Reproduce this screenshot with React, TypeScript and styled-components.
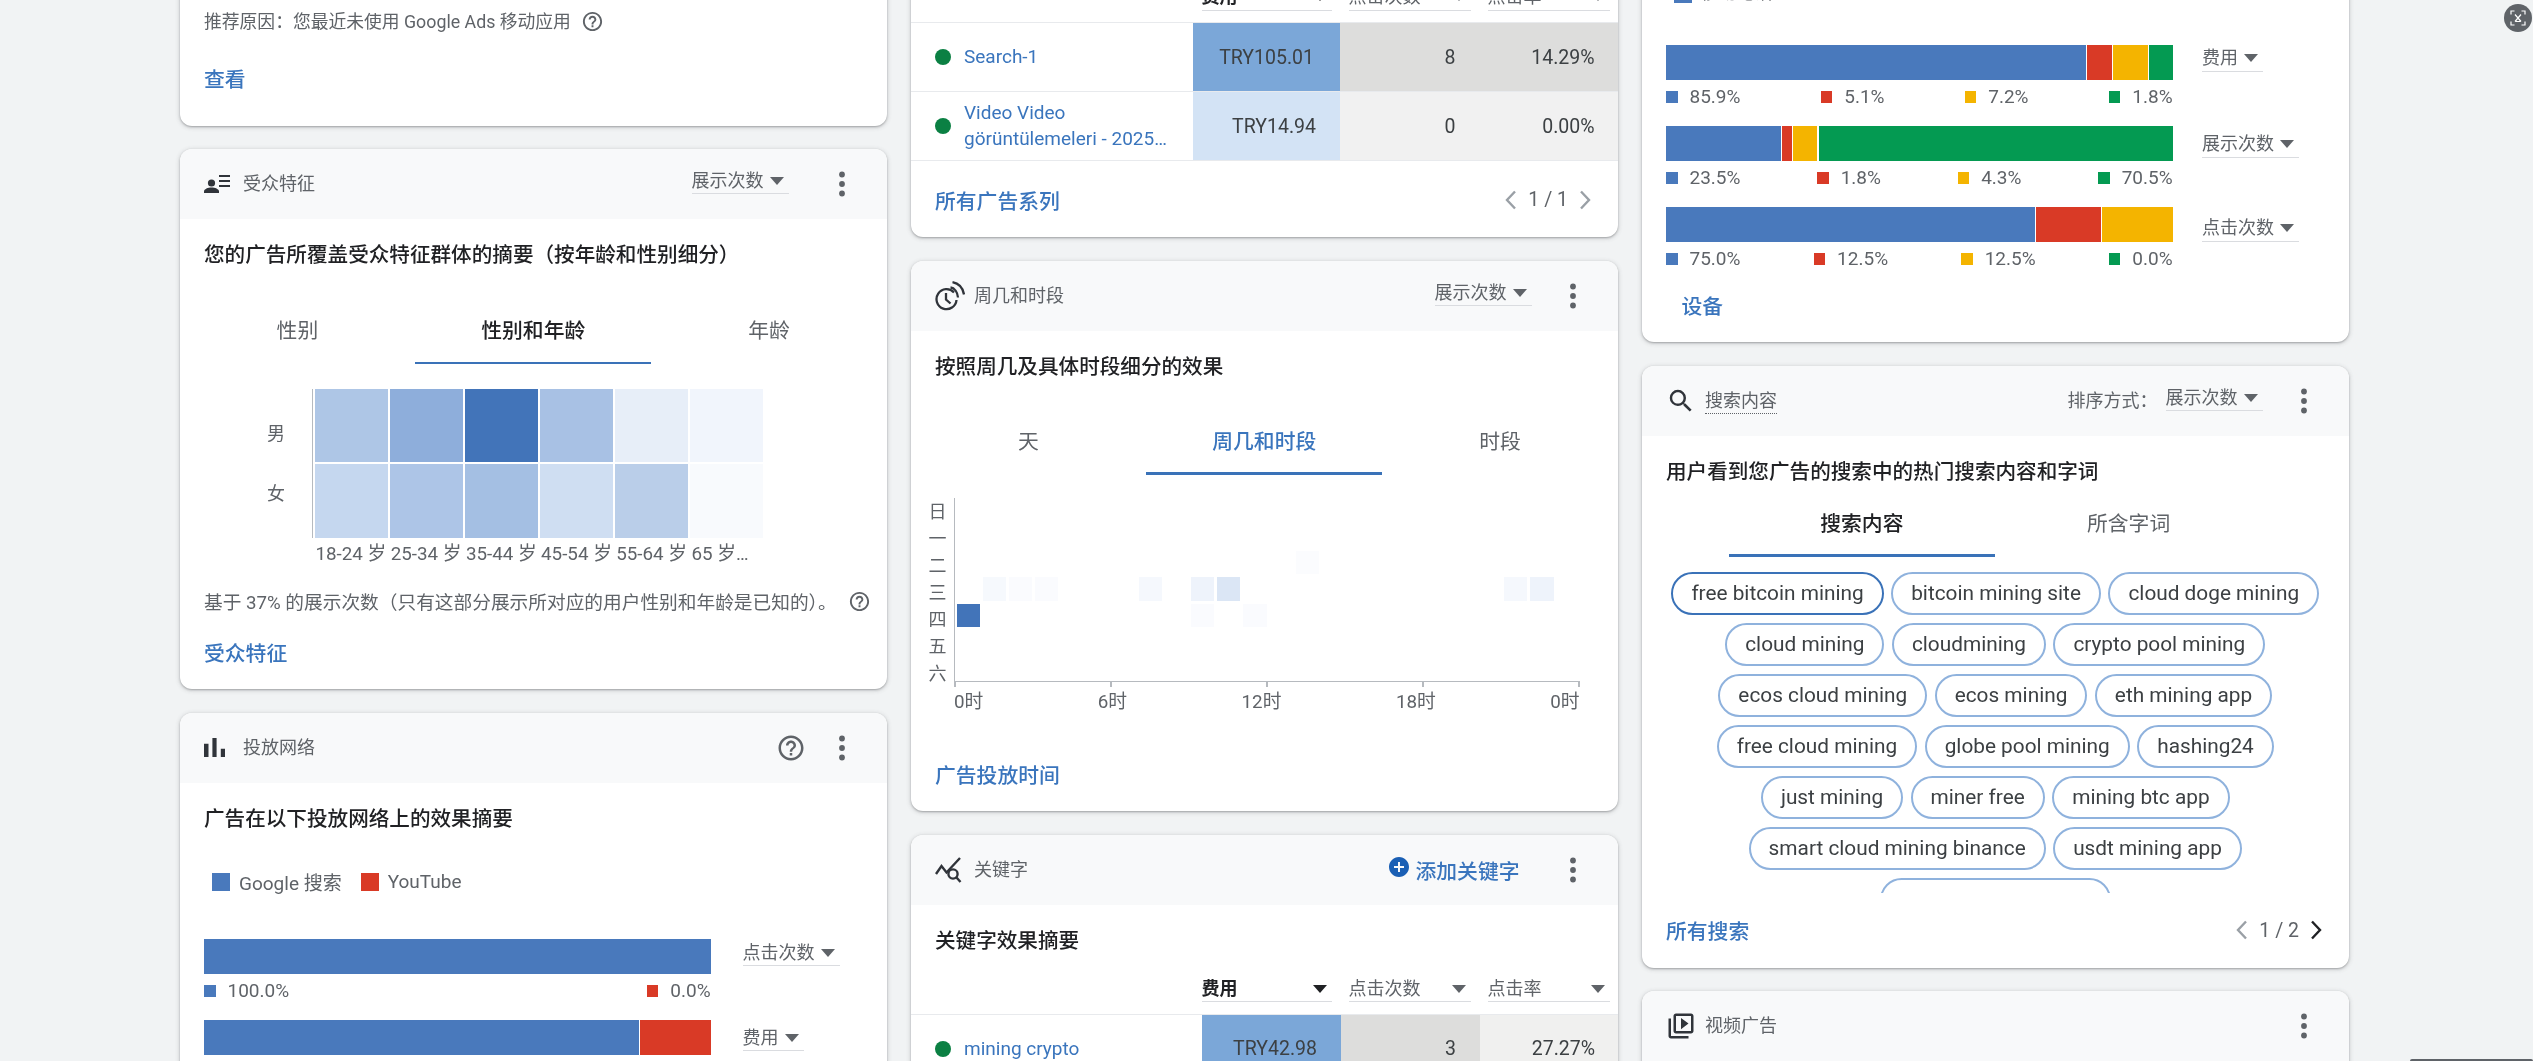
import React from 'react';
import styled, { createGlobalStyle } from 'styled-components';
import { MdAddCircle, MdHelpOutline, MdOutlineVideoLibrary, MdSearch } from 'react-icons/md';

const GlobalStyle = createGlobalStyle`
  html, body {
    margin: 0;
    padding: 0;
    background: #fff;
    overflow: hidden;
  }
  body {
    font-family: Roboto, "Noto Sans CJK SC", sans-serif;
    color: #3c4043;
  }
  * {
    box-sizing: border-box;
  }
`;

const Page = styled.div`
  position: relative;
  width: 2533px;
  height: 1061px;
  overflow: hidden;
  background: #f1f3f4;
  filter: blur(0.55px);
`;

const Columns = styled.div`
  display: grid;
  grid-template-columns: repeat(3, 707.5px);
  column-gap: 23.5px;
  padding-left: 179.5px;
`;

const Column = styled.div<{ $top: number }>`
  display: flex;
  flex-direction: column;
  gap: 23.5px;
  margin-top: ${p => p.$top}px;
`;

const Card = styled.section`
  background: #fff;
  border-radius: 12px;
  overflow: hidden;
  box-shadow: 0 1px 2px rgba(60, 64, 67, 0.35), 0 1px 4px 1px rgba(60, 64, 67, 0.16);
`;

const CardHeader = styled.header`
  display: flex;
  align-items: center;
  height: 70px;
  padding: 0 37.5px 0 24.5px;
  background: #f8f9fa;
`;

const IconSlot = styled.div`
  flex: none;
  display: flex;
  align-items: center;
  width: 39px;
  color: #30343a;
`;

const HeaderTitle = styled.div`
  flex: 1;
  font-size: 18px;
  line-height: 24px;
  color: #5f6368;
`;

const DottedTitle = styled.span`
  border-bottom: 1.5px dotted #5f6368;
  padding-bottom: 2px;
`;

const SortLabel = styled.span`
  font-size: 18px;
  line-height: 24px;
  color: #5f6368;
  margin-right: 8px;
`;

const Arrow = styled.span<{ $dark?: boolean }>`
  flex: none;
  width: 0;
  height: 0;
  border-left: 7px solid transparent;
  border-right: 7px solid transparent;
  border-top: 8px solid ${p => (p.$dark ? '#202124' : '#5f6368')};
`;

const SelectBox = styled.div<{ $bold?: boolean }>`
  display: flex;
  align-items: center;
  justify-content: space-between;
  gap: 6px;
  height: 25.5px;
  padding-right: 5px;
  border-bottom: 1.5px solid #dadce0;
  font-size: 18px;
  line-height: 24px;
  font-weight: ${p => (p.$bold ? 700 : 400)};
  color: ${p => (p.$bold ? '#202124' : '#5f6368')};
`;

const HeaderSelect = styled(SelectBox)<{ $right: number }>`
  margin: 0 ${p => p.$right}px 5px 0;
`;

const BarSelect = styled(SelectBox)<{ $nudge: number }>`
  justify-self: start;
  margin-top: ${p => p.$nudge}px;
`;

const Dots = styled.svg`
  flex: none;
  width: 16px;
  height: 32px;
  fill: #5f6368;
`;

const HelpButton = styled.div<{ $size: number; $right?: number }>`
  flex: none;
  display: flex;
  color: #5f6368;
  margin-right: ${p => p.$right ?? 0}px;
  font-size: ${p => p.$size}px;
`;

const AddAction = styled.div`
  display: flex;
  align-items: center;
  gap: 5px;
  margin-right: 45px;
  font-size: 20.8px;
  font-weight: 500;
  color: #3a75bd;
  svg {
    color: #1a5fb4;
    margin-top: -6px;
  }
`;

const SummaryTitle = styled.h3`
  margin: 22px 24.5px 0;
  font-size: 20.6px;
  line-height: 28px;
  font-weight: 500;
  color: #202124;
`;

const ReasonRow = styled.div`
  display: flex;
  align-items: center;
  gap: 10px;
  padding: 30px 24.5px 0;
  font-size: 17.8px;
  line-height: 24px;
  color: #5f6368;
`;

const CardFooter = styled.footer<{ $top?: number; $bottom?: number }>`
  display: flex;
  align-items: center;
  justify-content: space-between;
  height: 72px;
  margin: ${p => p.$top ?? 0}px 0 ${p => p.$bottom ?? 0}px;
  padding: 0 26px 3px 24.5px;
`;

const FooterLink = styled.a<{ $indent?: number }>`
  margin-left: ${p => p.$indent ?? 0}px;
  font-size: 20.8px;
  font-weight: 500;
  color: #3a75bd;
`;

const Pager = styled.div`
  display: flex;
  align-items: center;
  gap: 11px;
  font-size: 19.5px;
  color: #5f6368;
`;

const PagerChevron = styled.svg<{ $active?: boolean }>`
  width: 13px;
  height: 22px;
  fill: none;
  stroke: ${p => (p.$active ? '#202124' : '#9aa0a6')};
  stroke-width: 2.4;
`;

const Tabs = styled.div<{ $top: number; $inset?: number }>`
  display: flex;
  margin: ${p => p.$top}px ${p => p.$inset ?? 0}px 0;
`;

const Tab = styled.div<{ $active?: boolean; $blue?: boolean }>`
  position: relative;
  flex: 1;
  display: flex;
  align-items: center;
  justify-content: center;
  height: 66px;
  padding-bottom: 6px;
  font-size: 20.8px;
  font-weight: ${p => (p.$active ? 500 : 400)};
  color: ${p => (p.$active ? (p.$blue ? '#3a75bd' : '#202124') : '#5f6368')};
  &::after {
    content: '';
    position: absolute;
    left: 0;
    right: 0;
    bottom: 1px;
    height: 2.5px;
    background: ${p => (p.$active ? '#3a72b8' : 'transparent')};
  }
`;

const HeatArea = styled.div`
  display: grid;
  grid-template-columns: 132.5px 1fr;
  margin-top: 24px;
`;

const HeatLabels = styled.div`
  display: flex;
  flex-direction: column;
  justify-content: center;
  align-items: flex-end;
  gap: 36px;
  padding: 0 27px 0 0;
  font-size: 18px;
  line-height: 24px;
  color: #5f6368;
`;

const HeatPlot = styled.div`
  display: grid;
  grid-template-columns: repeat(6, 73px);
  grid-template-rows: 73px 74px;
  gap: 2.2px;
  width: 454px;
  padding-left: 1.5px;
  border-left: 1.5px solid #b6babf;
`;

const HeatCell = styled.div<{ $color: string }>`
  background: ${p => p.$color};
`;

const AgeLabels = styled.div`
  display: grid;
  grid-template-columns: repeat(6, 75.2px);
  margin: 4px 0 0 136px;
  font-size: 18.8px;
  line-height: 24px;
  color: #5f6368;
  white-space: nowrap;
`;

const NoteRow = styled.div`
  display: flex;
  justify-content: space-between;
  margin: 24px 16px 0 24.5px;
  font-size: 18.7px;
  line-height: 26px;
  color: #5f6368;
`;

const WeekArea = styled.div`
  display: grid;
  grid-template-columns: 18px 625.6px;
  column-gap: 7.5px;
  margin: 22.5px 0 0 18px;
`;

const DayLabels = styled.div`
  grid-row: 1 / span 3;
  display: flex;
  flex-direction: column;
  justify-content: space-between;
  height: 186px;
  margin-top: 2px;
  font-size: 18px;
  line-height: 24px;
  color: #5f6368;
`;

const WeekPlot = styled.div`
  display: grid;
  grid-template-columns: repeat(24, 1fr);
  grid-template-rows: repeat(7, 1fr);
  column-gap: 3px;
  row-gap: 3.4px;
  height: 184px;
  padding: 0 0 1px 1.5px;
  border-left: 1.5px solid #b6babf;
  border-bottom: 1.5px solid #b6babf;
`;

const WeekTicks = styled.div`
  display: flex;
  justify-content: space-between;
  grid-column: 2;
  height: 4.5px;
`;

const WeekTick = styled.span`
  width: 1.5px;
  background: #b6babf;
`;

const HourLabels = styled.div`
  display: flex;
  justify-content: space-between;
  grid-column: 2;
  margin-top: 3.5px;
  font-size: 18.8px;
  line-height: 24px;
  color: #5f6368;
`;

const TableHead = styled.div<{ $top?: number }>`
  display: grid;
  grid-template-columns: 291px 139px 139px 139px;
  height: 50px;
  margin-top: ${p => p.$top ?? 0}px;
  padding-top: 12px;
  border-bottom: 1.5px solid #e8eaed;
`;

const HeadCell = styled.div<{ $first?: boolean }>`
  padding: 0 9px 0 ${p => (p.$first ? 0 : 8)}px;
`;

const TableRow = styled.div<{ $wideCost?: boolean }>`
  display: grid;
  grid-template-columns: ${p => (p.$wideCost ? '282px 147.5px 139px 139px' : '291px 139px 139px 139px')};
  height: 69px;
  border-bottom: 1.5px solid #e8eaed;
`;

const NameCell = styled.div`
  display: flex;
  align-items: center;
  gap: 13px;
  padding: 0 23.5px 0 24.5px;
`;

const StatusDot = styled.span`
  flex: none;
  width: 16px;
  height: 16px;
  border-radius: 50%;
  background: #0b8043;
`;

const NameText = styled.span`
  display: -webkit-box;
  -webkit-box-orient: vertical;
  -webkit-line-clamp: 2;
  overflow: hidden;
  font-size: 19px;
  line-height: 26px;
  color: #3a75bd;
`;

const ValueCell = styled.div<{ $bg: string; $pad?: number }>`
  display: flex;
  align-items: center;
  justify-content: flex-end;
  padding-right: ${p => p.$pad ?? 23.5}px;
  background: ${p => p.$bg};
  font-size: 19.5px;
  color: #3c4043;
`;

const LegendRow = styled.div`
  display: flex;
  align-items: center;
  gap: 19px;
  height: 28px;
  margin: 35px 0 0 32.5px;
  font-size: 19px;
  color: #5f6368;
`;

const TopLegend = styled.div`
  display: flex;
  align-items: center;
  height: 48px;
  padding-left: 32px;
  font-size: 18px;
  color: #5f6368;
`;

const LegendItem = styled.div`
  display: flex;
  align-items: center;
  gap: 9px;
`;

const LegendCaption = styled.span`
  margin-bottom: 6px;
`;

const LegendSwatch = styled.span<{ $color: string }>`
  flex: none;
  width: 18px;
  height: 18px;
  background: ${p => p.$color};
`;

const BarList = styled.div<{ $top: number }>`
  display: flex;
  flex-direction: column;
  gap: 17px;
  margin: ${p => p.$top}px 0 0 24.5px;
`;

const BarRow = styled.div<{ $gap: number }>`
  display: grid;
  grid-template-columns: 506.6px auto;
  column-gap: ${p => p.$gap}px;
  justify-content: start;
`;

const Bar = styled.div`
  display: flex;
  gap: 1.2px;
  height: 35px;
`;

const BarSegment = styled.div<{ $color: string; $grow: number }>`
  flex: ${p => p.$grow} 0 0;
  background: ${p => p.$color};
`;

const BarValues = styled.div`
  display: flex;
  justify-content: space-between;
  grid-column: 1;
  height: 24px;
  margin-top: 5px;
  font-size: 19px;
  line-height: 24px;
  color: #5f6368;
`;

const BarValue = styled.div`
  display: flex;
  align-items: center;
  gap: 12px;
`;

const ValueSwatch = styled.span<{ $color: string }>`
  flex: none;
  width: 11.5px;
  height: 12px;
  background: ${p => p.$color};
`;

const ChipCloud = styled.div`
  display: flex;
  flex-wrap: wrap;
  justify-content: center;
  align-content: flex-start;
  gap: 7.5px;
  height: 321.4px;
  margin: 14px 24px 0;
  overflow: hidden;
`;

const Chip = styled.div<{ $active?: boolean; $width?: number }>`
  display: flex;
  align-items: center;
  height: 43.5px;
  min-width: ${p => p.$width ?? 0}px;
  padding: 0 18px;
  border: 2px solid ${p => (p.$active ? '#3a72b8' : '#8fb2dd')};
  border-radius: 22px;
  font-size: 20.8px;
  color: #3c4043;
  white-space: nowrap;
`;

const VideoSpacer = styled.div`
  height: 60px;
`;

const CaptureButton = styled.div`
  position: absolute;
  top: 4px;
  left: 2504px;
  display: flex;
  align-items: center;
  justify-content: center;
  width: 28px;
  height: 28px;
  border-radius: 50%;
  background: #5f6368;
`;

const BottomBar = styled.div`
  position: absolute;
  left: 2410px;
  right: 0;
  bottom: 0;
  height: 2.5px;
  border-radius: 2px 2px 0 0;
  background: #5f6368;
`;

const BLUE = '#4979bc';
const RED = '#d93a26';
const YELLOW = '#f4b400';
const GREEN = '#049a52';

// full-width punctuation kept as escapes so an editor can't turn it into ASCII
const REASON_TEXT = '推荐原因\uFF1A您最近未使用 Google Ads 移动应用';
const AUDIENCE_SUMMARY = '您的广告所覆盖受众特征群体的摘要\uFF08按年龄和性别细分\uFF09';
const AUDIENCE_NOTE = '基于 37% 的展示次数\uFF08只有这部分展示所对应的用户性别和年龄是已知的\uFF09。';
const SORT_LABEL = '排序方式\uFF1A';

type BarData = {
  metric: string;
  nudge: number;
  segments: { color: string; width: number }[];
  values: { color: string; label: string }[];
};

const NETWORK_BARS: BarData[] = [
  {
    metric: '点击次数',
    nudge: 2,
    segments: [{ color: BLUE, width: 100 }],
    values: [
      { color: BLUE, label: '100.0%' },
      { color: RED, label: '0.0%' },
    ],
  },
  {
    metric: '费用',
    nudge: 6,
    segments: [
      { color: BLUE, width: 897 },
      { color: RED, width: 146 },
    ],
    values: [
      { color: BLUE, label: '86.0%' },
      { color: RED, label: '14.0%' },
    ],
  },
];

const DEVICE_BARS: BarData[] = [
  {
    metric: '费用',
    nudge: 1,
    segments: [
      { color: BLUE, width: 866 },
      { color: RED, width: 50 },
      { color: YELLOW, width: 72 },
      { color: GREEN, width: 49 },
    ],
    values: [
      { color: BLUE, label: '85.9%' },
      { color: RED, label: '5.1%' },
      { color: YELLOW, label: '7.2%' },
      { color: GREEN, label: '1.8%' },
    ],
  },
  {
    metric: '展示次数',
    nudge: 6,
    segments: [
      { color: BLUE, width: 237 },
      { color: RED, width: 20 },
      { color: YELLOW, width: 50 },
      { color: GREEN, width: 729 },
    ],
    values: [
      { color: BLUE, label: '23.5%' },
      { color: RED, label: '1.8%' },
      { color: YELLOW, label: '4.3%' },
      { color: GREEN, label: '70.5%' },
    ],
  },
  {
    metric: '点击次数',
    nudge: 9,
    segments: [
      { color: BLUE, width: 761 },
      { color: RED, width: 135 },
      { color: YELLOW, width: 145 },
    ],
    values: [
      { color: BLUE, label: '75.0%' },
      { color: RED, label: '12.5%' },
      { color: YELLOW, label: '12.5%' },
      { color: GREEN, label: '0.0%' },
    ],
  },
];

const HEAT_COLORS = [
  '#aec6e6', '#8eaedb', '#4274b9', '#a8c1e4', '#e7eef8', '#f1f5fc',
  '#c5d7ef', '#adc5e7', '#a4bfe3', '#cfdef2', '#bacee9', '#f8fafd',
];

const AGE_LABELS = ['18-24 岁', '25-34 岁', '35-44 岁', '45-54 岁', '55-64 岁', '65 岁…'];
const DAY_LABELS = ['日', '一', '二', '三', '四', '五', '六'];
const HOUR_LABELS = ['0时', '6时', '12时', '18时', '0时'];

// day index, hour index -> colour
const WEEK_CELLS: Record<string, string> = {
  '2-13': '#fbfcfe',
  '3-1': '#f6f9fd',
  '3-2': '#fafbfe',
  '3-3': '#fafbfe',
  '3-7': '#f5f8fd',
  '3-9': '#eef3fb',
  '3-10': '#dbe6f5',
  '3-21': '#f5f8fd',
  '3-22': '#eef3fb',
  '4-0': '#4274b9',
  '4-9': '#fafbfe',
  '4-11': '#fafbfe',
};

const CHIPS = [
  'free bitcoin mining', 'bitcoin mining site', 'cloud doge mining',
  'cloud mining', 'cloudmining', 'crypto pool mining',
  'ecos cloud mining', 'ecos mining', 'eth mining app',
  'free cloud mining', 'globe pool mining', 'hashing24',
  'just mining', 'miner free', 'mining btc app',
  'smart cloud mining binance', 'usdt mining app',
];

const MoreDots = () => (
  <Dots viewBox="0 0 16 32">
    <circle cx="8" cy="6.5" r="2.9" />
    <circle cx="8" cy="16" r="2.9" />
    <circle cx="8" cy="25.5" r="2.9" />
  </Dots>
);

const AudienceIcon = () => (
  <svg width="26" height="18" viewBox="0 0 26 18" fill="currentColor">
    <circle cx="7.5" cy="8" r="3.6" />
    <path d="M0 18v-1.5c0-2.5 4-4 7.5-4s7.5 1.5 7.5 4V18z" />
    <path d="M15 0h11v2H15zM15 5h11v2H15zM15 10h11v2H15z" />
  </svg>
);

const NetworkIcon = () => (
  <svg width="21" height="19" viewBox="5 5 14 14" preserveAspectRatio="none" fill="currentColor">
    <path d="M5 9.2h3V19H5zM10.6 5h2.8v14h-2.8zM16.2 13H19v6h-2.8z" />
  </svg>
);

const ClockIcon = () => (
  <svg width="30" height="30" viewBox="0 0 30 30" fill="none" stroke="currentColor" strokeWidth="2.3">
    <path d="M19 11.5A10 10 0 1 0 21.5 19" />
    <path d="M11 12v6.5l4.5 4" />
    <path d="M15.5 6.5C19.5 7 22.5 11 23 16.5" />
    <path d="M17.5 1.2C24 2.5 28 7.5 29 13.5" />
  </svg>
);

const KeywordIcon = () => (
  <svg width="27" height="26" viewBox="0 0 27 26" fill="none" stroke="currentColor" strokeWidth="2.4">
    <path d="M1 17l5.5-8 5 6.5L25 1" />
    <circle cx="18" cy="17" r="4.6" fill="#f8f9fa" />
    <path d="M21.5 20.5l4 4.5" />
  </svg>
);

const ChevronLeft = ({ active }: { active?: boolean }) => (
  <PagerChevron $active={active} viewBox="0 0 13 22">
    <path d="M11 2.5L3 11l8 8.5" />
  </PagerChevron>
);

const ChevronRight = ({ active }: { active?: boolean }) => (
  <PagerChevron $active={active} viewBox="0 0 13 22">
    <path d="M2 2.5L10 11l-8 8.5" />
  </PagerChevron>
);

const Bars = ({ data, top, selectGap }: { data: BarData[]; top: number; selectGap: number }) => (
  <BarList $top={top}>
    {data.map(bar => (
      <BarRow key={bar.metric} $gap={selectGap}>
        <Bar>
          {bar.segments.map(segment => (
            <BarSegment key={segment.color} $color={segment.color} $grow={segment.width} />
          ))}
        </Bar>
        <BarSelect $nudge={bar.nudge}>
          {bar.metric}
          <Arrow />
        </BarSelect>
        <BarValues>
          {bar.values.map(value => (
            <BarValue key={value.color}>
              <ValueSwatch $color={value.color} />
              {value.label}
            </BarValue>
          ))}
        </BarValues>
      </BarRow>
    ))}
  </BarList>
);

const Head = ({ top }: { top?: number }) => (
  <TableHead $top={top}>
    <div />
    <HeadCell $first>
      <SelectBox $bold>
        费用
        <Arrow $dark />
      </SelectBox>
    </HeadCell>
    <HeadCell>
      <SelectBox>
        点击次数
        <Arrow />
      </SelectBox>
    </HeadCell>
    <HeadCell>
      <SelectBox>
        点击率
        <Arrow />
      </SelectBox>
    </HeadCell>
  </TableHead>
);

export default function App() {
  return (
    <Page>
      <GlobalStyle />
      <Columns>
        <Column $top={-20.5}>
          <Card>
            <ReasonRow>
              {REASON_TEXT}
              <HelpButton $size={23}>
                <MdHelpOutline />
              </HelpButton>
            </ReasonRow>
            <CardFooter $top={10} $bottom={10}>
              <FooterLink>查看</FooterLink>
            </CardFooter>
          </Card>

          <Card>
            <CardHeader>
              <IconSlot>
                <AudienceIcon />
              </IconSlot>
              <HeaderTitle>受众特征</HeaderTitle>
              <HeaderSelect $right={45}>
                展示次数
                <Arrow />
              </HeaderSelect>
              <MoreDots />
            </CardHeader>
            <SummaryTitle>{AUDIENCE_SUMMARY}</SummaryTitle>
            <Tabs $top={30}>
              <Tab>性别</Tab>
              <Tab $active>性别和年龄</Tab>
              <Tab>年龄</Tab>
            </Tabs>
            <HeatArea>
              <HeatLabels>
                <span>男</span>
                <span>女</span>
              </HeatLabels>
              <HeatPlot>
                {HEAT_COLORS.map((color, i) => (
                  <HeatCell key={i} $color={color} />
                ))}
              </HeatPlot>
            </HeatArea>
            <AgeLabels>
              {AGE_LABELS.map(label => (
                <span key={label}>{label}</span>
              ))}
            </AgeLabels>
            <NoteRow>
              {AUDIENCE_NOTE}
              <HelpButton $size={23}>
                <MdHelpOutline />
              </HelpButton>
            </NoteRow>
            <CardFooter $top={1}>
              <FooterLink>受众特征</FooterLink>
            </CardFooter>
          </Card>

          <Card>
            <CardHeader>
              <IconSlot>
                <NetworkIcon />
              </IconSlot>
              <HeaderTitle>投放网络</HeaderTitle>
              <HelpButton $size={30} $right={28}>
                <MdHelpOutline />
              </HelpButton>
              <MoreDots />
            </CardHeader>
            <SummaryTitle>广告在以下投放网络上的效果摘要</SummaryTitle>
            <LegendRow>
              <LegendItem>
                <LegendSwatch $color={BLUE} />
                Google 搜索
              </LegendItem>
              <LegendItem>
                <LegendSwatch $color={RED} />
                YouTube
              </LegendItem>
            </LegendRow>
            <Bars data={NETWORK_BARS} top={43} selectGap={32} />
          </Card>
        </Column>

        <Column $top={-27}>
          <Card>
            <Head />
            <TableRow $wideCost>
              <NameCell>
                <StatusDot />
                <NameText>Search-1</NameText>
              </NameCell>
              <ValueCell $bg="#7ba7d8" $pad={26}>TRY105.01</ValueCell>
              <ValueCell $bg="#dddddc">8</ValueCell>
              <ValueCell $bg="#dddddc">14.29%</ValueCell>
            </TableRow>
            <TableRow $wideCost>
              <NameCell>
                <StatusDot />
                <NameText>Video Video görüntülemeleri - 2025-03-17</NameText>
              </NameCell>
              <ValueCell $bg="#d3e3f5" $pad={24}>TRY14.94</ValueCell>
              <ValueCell $bg="#f1f1f1">0</ValueCell>
              <ValueCell $bg="#f1f1f1">0.00%</ValueCell>
            </TableRow>
            <CardFooter $top={4}>
              <FooterLink>所有广告系列</FooterLink>
              <Pager>
                <ChevronLeft />
                1 / 1
                <ChevronRight />
              </Pager>
            </CardFooter>
          </Card>

          <Card>
            <CardHeader>
              <IconSlot>
                <ClockIcon />
              </IconSlot>
              <HeaderTitle>周几和时段</HeaderTitle>
              <HeaderSelect $right={33}>
                展示次数
                <Arrow />
              </HeaderSelect>
              <MoreDots />
            </CardHeader>
            <SummaryTitle>按照周几及具体时段细分的效果</SummaryTitle>
            <Tabs $top={29}>
              <Tab>天</Tab>
              <Tab $active $blue>周几和时段</Tab>
              <Tab>时段</Tab>
            </Tabs>
            <WeekArea>
              <DayLabels>
                {DAY_LABELS.map(day => (
                  <span key={day}>{day}</span>
                ))}
              </DayLabels>
              <WeekPlot>
                {DAY_LABELS.flatMap((_, day) =>
                  Array.from({ length: 24 }, (_, hour) => (
                    <HeatCell key={`${day}-${hour}`} $color={WEEK_CELLS[`${day}-${hour}`] ?? 'transparent'} />
                  )),
                )}
              </WeekPlot>
              <WeekTicks>
                {HOUR_LABELS.map((_, i) => (
                  <WeekTick key={i} />
                ))}
              </WeekTicks>
              <HourLabels>
                {HOUR_LABELS.map((label, i) => (
                  <span key={i}>{label}</span>
                ))}
              </HourLabels>
            </WeekArea>
            <CardFooter $top={25}>
              <FooterLink>广告投放时间</FooterLink>
            </CardFooter>
          </Card>

          <Card>
            <CardHeader>
              <IconSlot>
                <KeywordIcon />
              </IconSlot>
              <HeaderTitle>关键字</HeaderTitle>
              <AddAction>
                <MdAddCircle size={24} />
                添加关键字
              </AddAction>
              <MoreDots />
            </CardHeader>
            <SummaryTitle>关键字效果摘要</SummaryTitle>
            <Head top={10} />
            <TableRow>
              <NameCell>
                <StatusDot />
                <NameText>mining crypto</NameText>
              </NameCell>
              <ValueCell $bg="#7ba7d8">TRY42.98</ValueCell>
              <ValueCell $bg="#dddddc">3</ValueCell>
              <ValueCell $bg="#f0f0ef">27.27%</ValueCell>
            </TableRow>
          </Card>
        </Column>

        <Column $top={-30}>
          <Card>
            <TopLegend>
              <LegendItem>
                <LegendSwatch $color={BLUE} />
                <LegendCaption>移动电话</LegendCaption>
              </LegendItem>
            </TopLegend>
            <Bars data={DEVICE_BARS} top={27} selectGap={29.5} />
            <CardFooter $top={-1}>
              <FooterLink $indent={15.5}>设备</FooterLink>
            </CardFooter>
          </Card>

          <Card>
            <CardHeader>
              <IconSlot>
                <MdSearch size={30} />
              </IconSlot>
              <HeaderTitle>
                <DottedTitle>搜索内容</DottedTitle>
              </HeaderTitle>
              <SortLabel>{SORT_LABEL}</SortLabel>
              <HeaderSelect $right={33}>
                展示次数
                <Arrow />
              </HeaderSelect>
              <MoreDots />
            </CardHeader>
            <SummaryTitle>用户看到您广告的搜索中的热门搜索内容和字词</SummaryTitle>
            <Tabs $top={6} $inset={87}>
              <Tab $active>搜索内容</Tab>
              <Tab>所含字词</Tab>
            </Tabs>
            <ChipCloud>
              {CHIPS.map((chip, i) => (
                <Chip key={chip} $active={i === 0}>{chip}</Chip>
              ))}
              <Chip $width={231} />
            </ChipCloud>
            <CardFooter $top={3}>
              <FooterLink>所有搜索</FooterLink>
              <Pager>
                <ChevronLeft />
                1 / 2
                <ChevronRight active />
              </Pager>
            </CardFooter>
          </Card>

          <Card>
            <CardHeader>
              <IconSlot>
                <MdOutlineVideoLibrary size={30} />
              </IconSlot>
              <HeaderTitle>视频广告</HeaderTitle>
              <MoreDots />
            </CardHeader>
            <VideoSpacer />
          </Card>
        </Column>
      </Columns>

      <CaptureButton>
        <svg width="16" height="16" viewBox="0 0 16 16" fill="none" stroke="#fff" strokeWidth="1.2">
          <path d="M1 4.5V1h3.5M11.5 1H15v3.5M15 11.5V15h-3.5M4.5 15H1v-3.5" />
          <path d="M5 4.5l6 7M11 4.5l-6 7M5.5 11.5h5" />
        </svg>
      </CaptureButton>
      <BottomBar />
    </Page>
  );
}
